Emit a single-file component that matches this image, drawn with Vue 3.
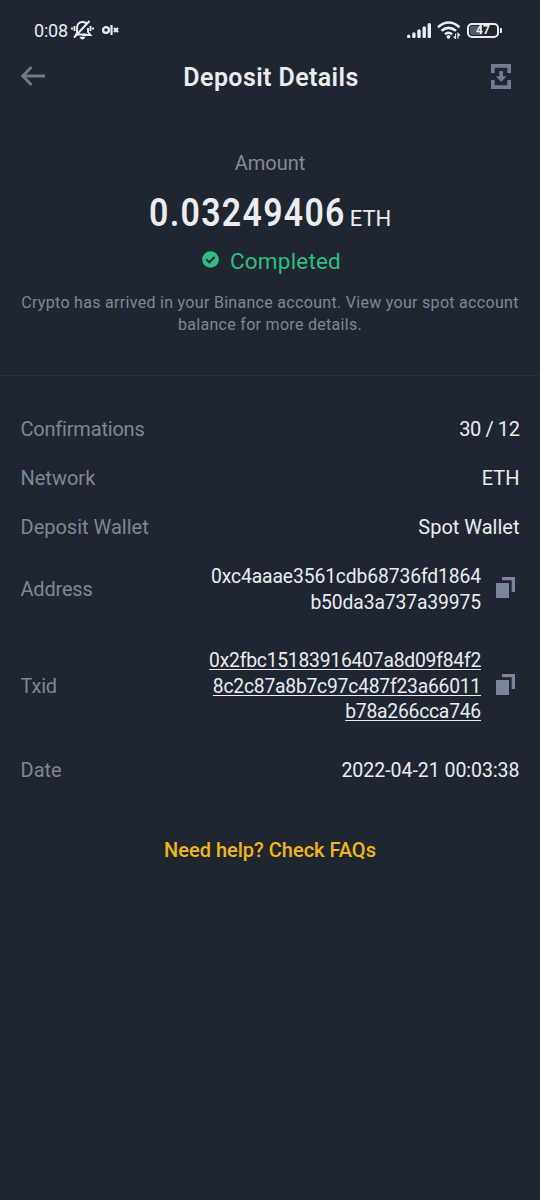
<script setup>
const rows = [
  { label: 'Confirmations', lines: ['30 / 12'], key: 'confirmations' },
  { label: 'Network', lines: ['ETH'], key: 'network' },
  { label: 'Deposit Wallet', lines: ['Spot Wallet'], key: 'wallet' },
  { label: 'Address', lines: ['0xc4aaae3561cdb68736fd1864', 'b50da3a737a39975'], key: 'address', copy: true },
  { label: 'Txid', lines: ['0x2fbc15183916407a8d09f84f2', '8c2c87a8b7c97c487f23a66011', 'b78a266cca746'], key: 'txid', copy: true },
  { label: 'Date', lines: ['2022-04-21 00:03:38'], key: 'date' },
]
</script>

<template>
  <main class="screen">
    <header class="status">
      <span class="clock">0:08</span>
      <svg class="bell" viewBox="0 0 23 20">
        <path d="M4 14.500H16M6 13.500V8C6 4.500 8 2 11.500 2C14 2 15.500 3 16.300 4.500M17 8V12L19.500 15H11M3.500 6V11M19.500 6V11M1 7.500V9.500M22 7.500V9.500M3 17.500L18.500 1" fill="none" stroke="#e8edf5" stroke-width="1.900" />
        <path d="M8.500 16.800H14.500Q13.500 19.500 11.500 19.500T8.500 16.800Z" fill="#e8edf5" />
      </svg>
      <svg class="key" viewBox="0 0 17 10">
        <path d="M9.500 0V10M12 3L16 7M16 3L12 7" fill="none" stroke="#e8edf5" stroke-width="2.200" />
        <circle cx="4" cy="5" r="2.900" fill="none" stroke="#e8edf5" stroke-width="2.300" />
      </svg>
      <span class="grow"></span>
      <svg class="signal" viewBox="0 0 24 15">
        <path d="M1.700 13.500V13.300M6.900 13.500V11M12 13.500V8M17.200 13.500V5M22.300 13.500V1.700" stroke="#e8edf5" stroke-width="3.400" stroke-linecap="round" />
      </svg>
      <svg class="wifi" viewBox="0 0 24 18">
        <path d="M1 6.200Q11.500 -3.200 22.500 6.200M4.500 9.800Q11.500 3.800 19 9.800M8 13.200Q11.500 10.300 15 13.200" fill="none" stroke="#e8edf5" stroke-width="2.600" />
        <circle cx="11.500" cy="15.800" r="1.900" fill="#e8edf5" />
        <path d="M18.500 12.500V17.500L16.700 15.500M21 17.500V12.500L22.800 14.500" fill="none" stroke="#e8edf5" stroke-width="1.200" />
      </svg>
      <span class="battery"><b>47</b></span>
      <span class="nub"></span>
    </header>

    <nav class="nav">
      <svg class="back" viewBox="0 0 24 20">
        <path d="M24 10H2M10.500 1L1.700 10L10.500 19" fill="none" stroke="#737b89" stroke-width="2.900" />
      </svg>
      <h1>Deposit Details</h1>
      <svg class="save" viewBox="0 0 20 25">
        <path d="M0 0H20V9H16.300V3.800H3.700V9H0ZM0 16H3.700V21.200H16.300V16H20V25H0ZM8.300 7H12V12.300H15.500L10.200 18L4.900 12.300H8.300Z" fill="#747c90" />
      </svg>
    </nav>

    <section class="summary">
      <p class="caption">Amount</p>
      <p class="amount"><strong>0.03249406</strong><span class="unit">ETH</span></p>
      <p class="state">
        <svg viewBox="0 0 17 17">
          <circle cx="8.500" cy="8.500" r="8.300" fill="#2ebd85" />
          <path d="M4.300 8.400L7.300 11.300L12.700 6" fill="none" stroke="#202630" stroke-width="2" />
        </svg>
        <span>Completed</span>
      </p>
      <p class="note">Crypto has arrived in your Binance account. View your spot account<br>balance for more details.</p>
    </section>

    <dl class="details">
      <div v-for="row in rows" :key="row.key" class="row" :class="row.key">
        <dt>{{ row.label }}</dt>
        <dd><span v-for="line in row.lines" :key="line" class="line">{{ line }}</span></dd>
        <svg v-if="row.copy" class="copy" viewBox="0 0 19 21">
          <path d="M0 6H13V21H0ZM6 0H19V15H15.700V3.200H6Z" fill="#7c8499" />
        </svg>
      </div>
    </dl>
    <p class="help">Need help? Check FAQs</p>
  </main>
</template>

<style>
body { margin: 0; background: #202630; }
</style>
<style scoped>
.screen { box-sizing: border-box; width: 540px; height: 1200px; padding-top: 18px; overflow: hidden; background: #202630; color: #eaecf2; font-family: Roboto, "Liberation Sans", sans-serif; }
p, h1, dl, dd { margin: 0; }
svg { display: block; flex: none; }
.status { height: 24px; display: flex; align-items: center; padding: 0 38px 0 34px; }
.clock { width: 37px; font-size: 18px; letter-spacing: -.2px; }
.bell { width: 23px; height: 20px; }
.key { width: 17px; height: 10px; margin-left: 8px; }
.grow { flex: 1; }
.signal { width: 24px; height: 15px; }
.wifi { width: 24px; height: 18px; margin: 0 6px; }
.battery { box-sizing: border-box; width: 32px; height: 15px; border: 2px solid #e8edf5; border-radius: 5px; display: flex; align-items: center; justify-content: center; background: linear-gradient(90deg, #545a65 12px, transparent 12px) content-box; padding: 1px; }
.battery b { font-size: 12px; line-height: 11px; }
.nub { width: 2px; height: 5px; margin-left: 1px; background: #e8edf5; border-radius: 0 1px 1px 0; }
.nav { height: 68px; display: flex; align-items: center; justify-content: space-between; padding: 0 29px 0 21px; }
.back { width: 24px; height: 20px; }
.save { width: 20px; height: 25px; }
h1 { font-size: 25px; font-weight: 600; line-height: 30px; padding-top: 4px; letter-spacing: .4px; margin-left: 6px; }
.summary { box-sizing: border-box; height: 266px; padding-top: 41px; border-bottom: 1px solid #2c333d; color: #848b98; }
.caption { font-size: 20px; line-height: 24px; text-align: center; }
.amount { display: flex; align-items: baseline; justify-content: center; height: 50px; margin-top: 13px; line-height: 50px; color: #eaecf2; }
.amount strong { width: 196px; font-size: 39px; font-weight: 600; letter-spacing: 1.500px; white-space: nowrap; transform: scaleX(.868); transform-origin: left; }
.unit { margin-left: 5px; font-size: 22px; }
.state { display: flex; align-items: center; justify-content: center; height: 30px; margin: 8px 0 0 3px; color: #2ebd85; font-size: 22.5px; line-height: 30px; letter-spacing: .2px; }
.state svg { width: 17px; height: 17px; margin: -4px 11px 0 0; }
.note { margin-top: 16px; font-size: 16px; line-height: 21.5px; letter-spacing: .3px; text-align: center; color: #7f8693; }
.details { padding: 29px 20.500px 0; }
.row { display: flex; align-items: center; height: 49px; font-size: 20px; line-height: 25.600px; }
dt { color: #7f8693; }
dd { flex: 1; text-align: right; }
.line { display: block; width: max-content; margin-left: auto; }
.copy { width: 19px; height: 21px; margin: -4px 4.500px 0 15px; }
.address { height: 74px; padding-top: 1px; box-sizing: border-box; }
.txid { height: 120px; padding-top: 1px; box-sizing: border-box; }
.confirmations dt, .address dt, .txid dt { letter-spacing: -.2px; }
.confirmations .line { letter-spacing: -.4px; }
.address .line { font-size: 19.300px; letter-spacing: -.110px; }
.txid .line { font-size: 19.300px; letter-spacing: -.220px; text-decoration: underline; text-decoration-thickness: 1px; text-underline-offset: 2px; text-decoration-skip-ink: none; }
.date .line { font-size: 19.500px; letter-spacing: -.020px; }
.help { margin-top: 43px; font-size: 20px; font-weight: 500; line-height: 24px; text-align: center; color: #f0b90b; }
</style>
